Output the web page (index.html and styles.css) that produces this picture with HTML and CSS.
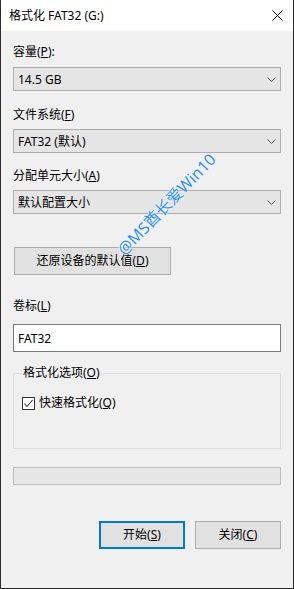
FILE: index.html
```html
<!DOCTYPE html>
<html lang="zh-CN">
<head>
    <meta charset="UTF-8">
    <title>格式化 FAT32 (G:)</title>
    <link rel="stylesheet" href="styles.css">
</head>
<body>
    <div class="window">
        <div class="titlebar">
            <span class="title">格式化 FAT32 (G:)</span>
            <svg class="close-icon" width="11" height="11" viewBox="0 0 11 11">
                <path d="M0.5 0.5 L10.5 10.5 M10.5 0.5 L0.5 10.5" stroke="#000" stroke-width="1" fill="none"/>
            </svg>
        </div>

        <div class="content">
            <div class="label first">容量(<u>P</u>):</div>
            <div class="select">
                <span>14.5 GB</span>
                <svg class="chevron" width="9" height="5" viewBox="0 0 9 5"><path d="M0.5 0.5 L4.5 4.5 L8.5 0.5" stroke="#555" fill="none"/></svg>
            </div>

            <div class="label">文件系统(<u>F</u>)</div>
            <div class="select">
                <span>FAT32 (默认)</span>
                <svg class="chevron" width="9" height="5" viewBox="0 0 9 5"><path d="M0.5 0.5 L4.5 4.5 L8.5 0.5" stroke="#555" fill="none"/></svg>
            </div>

            <div class="label tight">分配单元大小(<u>A</u>)</div>
            <div class="select">
                <span>默认配置大小</span>
                <svg class="chevron" width="9" height="5" viewBox="0 0 9 5"><path d="M0.5 0.5 L4.5 4.5 L8.5 0.5" stroke="#555" fill="none"/></svg>
            </div>

            <button class="btn restore-btn">还原设备的默认值(<u>D</u>)</button>

            <div class="label volume-label">卷标(<u>L</u>)</div>
            <div class="textbox">FAT32</div>

            <fieldset class="options">
                <legend>格式化选项(<u>O</u>)</legend>
                <div class="check-row">
                    <span class="checkbox">
                        <svg width="11" height="11" viewBox="0 0 11 11"><path d="M1.5 5.5 L4 8.5 L9.5 2" stroke="#333" stroke-width="1.1" fill="none"/></svg>
                    </span>
                    <span>快速格式化(<u>Q</u>)</span>
                </div>
            </fieldset>

            <div class="progress"></div>

            <div class="actions">
                <button class="btn action-btn default">开始(<u>S</u>)</button>
                <button class="btn action-btn">关闭(<u>C</u>)</button>
            </div>
        </div>

        <div class="watermark">@MS酋长爱Win10</div>
    </div>
</body>
</html>
```

FILE: styles.css
```css
body {
    margin: 0;
    padding: 0;
    font-family: "Noto Sans", "Noto Sans CJK SC", sans-serif;
    font-size: 12px;
    color: #000;
    background: #f0f0f0;
}

.window {
    position: relative;
    width: 294px;
    height: 589px;
    box-sizing: border-box;
    border: 1px solid #2b2b2b;
    border-top: none;
    background: #f0f0f0;
    overflow: hidden;
}

.titlebar {
    height: 31px;
    background: #fff;
    display: flex;
    align-items: center;
    justify-content: space-between;
    padding: 0 10px 0 8px;
}

.title {
    line-height: 16px;
}

.close-icon {
    display: block;
}

.content {
    display: flex;
    flex-direction: column;
    padding: 0 12px;
}

.label {
    height: 16px;
    line-height: 16px;
    margin-top: 16px;
}

.label.first {
    margin-top: 13px;
}

.label.tight {
    margin-top: 15px;
}

.select {
    margin-top: 6px;
    height: 24px;
    box-sizing: border-box;
    border: 1px solid #adadad;
    background: #e5e5e5;
    display: flex;
    align-items: center;
    justify-content: space-between;
    padding: 0 4px 0 4px;
}

.label.first + .select {
    margin-top: 7px;
}

.chevron {
    display: block;
}

.btn {
    font-family: inherit;
    font-size: 12px;
    color: #000;
    background: #e1e1e1;
    border: 1px solid #adadad;
    box-sizing: border-box;
    padding: 0;
    line-height: 16px;
}

.restore-btn {
    margin-top: 33px;
    margin-left: 1px;
    width: 157px;
    height: 28px;
}

.volume-label {
    margin-top: 23px;
}

.textbox {
    margin-top: 10px;
    height: 28px;
    box-sizing: border-box;
    border: 1px solid #7a7a7a;
    background: #fff;
    display: flex;
    align-items: center;
    padding-left: 4px;
}

.options {
    margin: 13px 0 0 0;
    padding: 0 8px;
    height: 84px;
    box-sizing: border-box;
    border: 1px solid #dcdcdc;
    min-width: 0;
}

.options legend {
    padding: 0 1px;
    line-height: 16px;
}

.check-row {
    display: flex;
    align-items: center;
    gap: 4px;
    margin-top: 14px;
    line-height: 16px;
}

.checkbox {
    width: 13px;
    height: 13px;
    box-sizing: border-box;
    border: 1px solid #333;
    background: #fff;
    display: flex;
    align-items: center;
    justify-content: center;
}

.checkbox svg {
    display: block;
}

.progress {
    margin-top: 18px;
    height: 18px;
    box-sizing: border-box;
    border: 1px solid #bcbcbc;
    background: #e6e6e6;
}

.actions {
    display: flex;
    justify-content: flex-end;
    gap: 10px;
    margin-top: 36px;
}

.action-btn {
    width: 86px;
    height: 28px;
}

.action-btn.default {
    border: 2px solid #0078d7;
}

.watermark {
    position: absolute;
    left: 99px;
    top: 194px;
    transform: rotate(-46deg);
    font-size: 16px;
    color: #2a8cf0;
    white-space: nowrap;
    text-shadow: 0 0 1px #fff, 0 0 1px #fff, 0 0 2px #fff;
    line-height: 20px;
}
```
